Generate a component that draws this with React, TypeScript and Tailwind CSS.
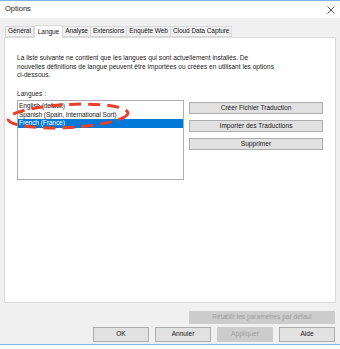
import React from "react";

const tabs = ["Général", "Langue", "Analyse", "Extensions", "Enquête Web", "Cloud Data Capture"];

function Btn({ label, disabled, className }: { label: string; disabled?: boolean; className?: string }) {
  return (
    <div
      className={
        "flex items-center justify-center border " +
        (disabled
          ? "border-[#cccccc] bg-[#cccccc] text-[#a0a0a0] "
          : "border-[#adadad] bg-[#e1e1e1] text-[#1a1a1a] ") +
        (className ?? "")
      }
    >
      {label}
    </div>
  );
}

export default function App() {
  return (
    <div
      className="relative flex h-[349px] w-[340px] flex-col bg-[#f0f0f0] text-[6.6px] leading-[8.5px] text-[#1a1a1a]"
      style={{ fontFamily: '"Liberation Sans", Arial, sans-serif' }}
    >
      {/* title bar */}
      <div className="flex h-[18px] items-center justify-between border-t border-[#7ab6e8] bg-white pl-[5px] pr-[4px]">
        <span className="text-[7.5px]">Options</span>
        <svg width="8" height="8" viewBox="0 0 8 8" className="mr-[1px]">
          <path d="M0.5 0.5 L7.5 7.5 M7.5 0.5 L0.5 7.5" stroke="#555" strokeWidth="1" />
        </svg>
      </div>

      {/* tabs */}
      <div className="mt-[8px] flex h-[11px] items-end pl-[5px] tracking-[-0.1px]">
        {tabs.map((t, i) =>
          i === 1 ? (
            <div key={t} className="relative z-10 -mb-px flex h-[13px] items-center border border-b-0 border-[#d9d9d9] bg-white px-[3px]">
              {t}
            </div>
          ) : (
            <div key={t} className="flex h-[11px] items-center border border-l-0 border-[#d9d9d9] bg-[#f0f0f0] px-[2px] first:border-l">
              {t}
            </div>
          )
        )}
      </div>

      {/* panel */}
      <div className="mx-[4px] flex h-[266px] flex-col border border-[#d9d9d9] bg-white px-[12px] pt-[16px]">
        <p className="whitespace-nowrap">
          La liste suivante ne contient que les langues qui sont actuellement installés. De
          <br />
          nouvelles définitions de langue peuvent être importées ou créées en utilisant les options
          <br />
          ci-dessous.
        </p>
        <div className="mt-[10px]">Langues :</div>
        <div className="mt-[2px] flex gap-[5px]">
          <div className="h-[80px] w-[172px] border border-[#abadb3] bg-white pt-[1px] tracking-[-0.1px]">
            <div className="px-[1px]">English (default)</div>
            <div className="px-[1px]">Spanish (Spain, International Sort)</div>
            <div className="bg-[#0078d7] px-[1px] text-white">French (France)</div>
          </div>
          <div className="flex w-[138px] flex-col gap-[6px] pt-[2px]">
            <Btn label="Créer Fichier Traduction" className="h-[12px]" />
            <Btn label="Importer des Traductions" className="h-[12px]" />
            <Btn label="Supprimer" className="h-[12px]" />
          </div>
        </div>
      </div>

      {/* footer */}
      <div className="mt-[8px] flex justify-end pr-[5px]">
        <Btn label="Rétablir les paramètres par défaut" disabled className="h-[13px] w-[146px]" />
      </div>
      <div className="mt-[3px] flex justify-end gap-[6px] pr-[5px]">
        <Btn label="OK" className="h-[15px] w-[56px]" />
        <Btn label="Annuler" className="h-[15px] w-[56px]" />
        <Btn label="Appliquer" disabled className="h-[15px] w-[56px]" />
        <Btn label="Aide" className="h-[15px] w-[56px]" />
      </div>
      <div className="mt-[2px] h-px bg-[#7ab6e8]" />
      <div className="flex-1 bg-white" />

      {/* red dashed highlight */}
      <svg className="pointer-events-none absolute left-[3px] top-[101px]" width="130" height="34" viewBox="0 0 130 34">
        <ellipse
          cx="65"
          cy="15"
          rx="60"
          ry="11.5"
          transform="rotate(-3 65 15)"
          fill="none"
          stroke="#e8402a"
          strokeWidth="3"
          strokeDasharray="12 7"
        />
      </svg>
    </div>
  );
}
